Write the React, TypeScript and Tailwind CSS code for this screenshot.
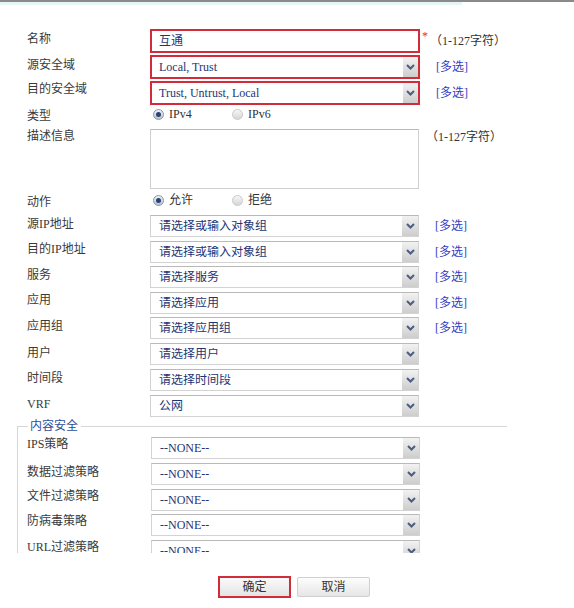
import React from 'react';

const FONT = { fontFamily: '"Liberation Serif", "Noto Sans CJK SC", serif' };

const Chevron = () => (
  <svg width="9" height="6" viewBox="0 0 9 6">
    <path d="M1 1 L4.5 4.5 L8 1" fill="none" stroke="#4d5d82" strokeWidth="2" />
  </svg>
);

const Select: React.FC<{ value: string }> = ({ value }) => (
  <div className="flex h-[22px] w-[269px] items-center border border-[#d3d3d3] border-t-[#b9b9b9] bg-white">
    <span className="flex-1 truncate pl-[8px] text-[12px] leading-none text-[#1e3473]">{value}</span>
    <div className="flex h-full w-[16px] items-center justify-center bg-linear-to-b from-[#f2f2f2] to-[#cdcdcd]">
      <Chevron />
    </div>
  </div>
);

const RedSelect: React.FC<{ value: string }> = ({ value }) => (
  <div className="h-[24px] w-[270px] border-2 border-[#d22b3a]">
    <div className="flex h-full items-center bg-white">
      <span className="flex-1 pl-[7px] text-[12px] leading-none text-[#1e3473]">{value}</span>
      <div className="flex h-full w-[15px] items-center justify-center bg-linear-to-b from-[#f2f2f2] to-[#cdcdcd]">
        <Chevron />
      </div>
    </div>
  </div>
);

const Radio: React.FC<{ checked?: boolean; label: string }> = ({ checked, label }) => (
  <div className="flex w-[79px] items-center gap-[5px]">
    {checked ? (
      <span className="flex h-[11px] w-[11px] items-center justify-center rounded-full border border-[#8797ae] bg-linear-to-b from-[#eef2f7] to-[#b8c4d4]">
        <span className="h-[5px] w-[5px] rounded-full bg-[#2a446f]" />
      </span>
    ) : (
      <span className="h-[11px] w-[11px] rounded-full border border-[#c9c9c9] bg-linear-to-b from-[#f7f7f7] to-[#d6d6d6]" />
    )}
    <span className="text-[12px] leading-none text-[#333]">{label}</span>
  </div>
);

const Multi = () => <span className="ml-[16px] text-[12px] leading-none text-[#3340c0]">[多选]</span>;

const Row: React.FC<{
  label: string;
  mt: number;
  children: React.ReactNode;
  labelTop?: number;
  labelW?: number;
}> = ({ label, mt, children, labelTop = 0, labelW = 123 }) => (
  <div className="flex items-start" style={{ marginTop: mt }}>
    <div className="shrink-0 text-[12px] leading-[16px] text-[#3a3a3a]" style={{ marginTop: labelTop, width: labelW }}>
      {label}
    </div>
    <div className="flex items-center">{children}</div>
  </div>
);

const App: React.FC = () => {
  return (
    <div className="h-[608px] w-[574px] overflow-hidden bg-white" style={FONT}>
      <div className="h-[2px] w-full bg-[#8a8a8a]" />
      <div className="h-[3px] w-[462px] bg-[#e6f5f5]" />

      <div className="pl-[27px]">
        <Row label="名称" mt={24} labelTop={2}>
          <div className="flex h-[24px] w-[270px] items-center border-2 border-[#d22b3a] bg-white">
            <span className="pl-[7px] text-[12px] leading-none text-[#1e3473]">互通</span>
          </div>
          <span className="ml-[2px] self-start text-[12px] leading-[14px] text-[#e0303a]">*</span>
          <span className="ml-[2px] text-[12px] leading-none text-[#333]">（1-127字符）</span>
        </Row>

        <Row label="源安全域" mt={2} labelTop={2}>
          <RedSelect value="Local, Trust" />
          <Multi />
        </Row>

        <Row label="目的安全域" mt={2} labelTop={0}>
          <RedSelect value="Trust, Untrust, Local" />
          <Multi />
        </Row>

        <Row label="类型" mt={1} labelTop={2}>
          <div className="flex h-[16px] items-center pl-[3px]">
            <Radio checked label="IPv4" />
            <Radio label="IPv6" />
          </div>
        </Row>

        <Row label="描述信息" mt={5} labelTop={-1}>
          <div className="h-[60px] w-[269px] border border-[#cfcfcf] border-t-[#b9b9b9] bg-white" />
          <span className="ml-[7px] self-start text-[12px] leading-[16px] text-[#333]">（1-127字符）</span>
        </Row>

        <Row label="动作" mt={3} labelTop={2}>
          <div className="flex h-[16px] items-center pl-[3px]">
            <Radio checked label="允许" />
            <Radio label="拒绝" />
          </div>
        </Row>

        <Row label="源IP地址" mt={5} labelTop={1}>
          <Select value="请选择或输入对象组" />
          <Multi />
        </Row>
        <Row label="目的IP地址" mt={4} labelTop={0}>
          <Select value="请选择或输入对象组" />
          <Multi />
        </Row>
        <Row label="服务" mt={3} labelTop={1}>
          <Select value="请选择服务" />
          <Multi />
        </Row>
        <Row label="应用" mt={4} labelTop={0}>
          <Select value="请选择应用" />
          <Multi />
        </Row>
        <Row label="应用组" mt={3} labelTop={1}>
          <Select value="请选择应用组" />
          <Multi />
        </Row>
        <Row label="用户" mt={4} labelTop={2}>
          <Select value="请选择用户" />
        </Row>
        <Row label="时间段" mt={4} labelTop={1}>
          <Select value="请选择时间段" />
        </Row>
        <Row label="VRF" mt={4} labelTop={1}>
          <Select value="公网" />
        </Row>
      </div>

      {/* 内容安全 fieldset */}
      <div className="ml-[17px] mt-[2px] w-[490px]">
        <div className="flex h-[14px] items-stretch">
          <div className="mt-[7px] w-[11px] border-l border-t border-[#d6d6d6]" />
          <span className="pl-[2px] pr-[3px] text-[12px] leading-[14px] text-[#2c4c9a]">内容安全</span>
          <div className="mt-[7px] flex-1 border-t border-[#d6d6d6]" />
        </div>
        <div className="h-[120px] overflow-hidden border-l border-[#d6d6d6] pl-[9px]">
          <Row label="IPS策略" mt={4} labelTop={-1} labelW={124}>
            <Select value="--NONE--" />
          </Row>
          <Row label="数据过滤策略" mt={4} labelTop={1} labelW={124}>
            <Select value="--NONE--" />
          </Row>
          <Row label="文件过滤策略" mt={4} labelTop={-1} labelW={124}>
            <Select value="--NONE--" />
          </Row>
          <Row label="防病毒策略" mt={3} labelTop={-1} labelW={124}>
            <Select value="--NONE--" />
          </Row>
          <Row label="URL过滤策略" mt={4} labelTop={-1} labelW={124}>
            <Select value="--NONE--" />
          </Row>
        </div>
      </div>

      <div className="mt-[23px] flex items-center pl-[218px]">
        <div className="h-[22px] w-[73px] border-2 border-[#d22b3a] bg-linear-to-b from-[#fafafa] to-[#e4e4e4] text-center text-[12px] leading-[18px] text-[#333]">
          确定
        </div>
        <div className="ml-[6px] h-[20px] w-[73px] rounded-[2px] border border-[#cfcfcf] bg-linear-to-b from-[#fdfdfd] to-[#e6e6e6] text-center text-[12px] leading-[18px] text-[#333]">
          取消
        </div>
      </div>
    </div>
  );
};

export default App;
